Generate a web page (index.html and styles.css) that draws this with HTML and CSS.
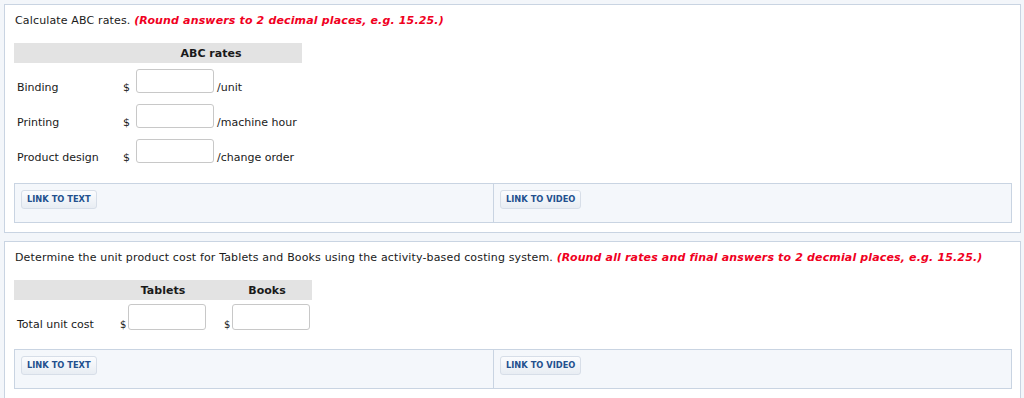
FILE: index.html
```html
<!DOCTYPE html>
<html>
<head>
<meta name="viewport" content="width=device-width, initial-scale=1">
<link rel="stylesheet" href="styles.css">
</head>
<body>

<div class="question">
  <p class="prompt">Calculate ABC rates. <span class="hint">(Round answers to 2 decimal places, e.g. 15.25.)</span></p>

  <table class="answers rates">
    <colgroup>
      <col class="c-label">
      <col class="c-cur">
      <col class="c-field">
      <col class="c-unit">
    </colgroup>
    <tr class="head">
      <th></th>
      <th colspan="3">ABC rates</th>
    </tr>
    <tr>
      <td class="label">Binding</td>
      <td class="cur">$</td>
      <td class="field"><input type="text"></td>
      <td class="unit">/unit</td>
    </tr>
    <tr>
      <td class="label">Printing</td>
      <td class="cur">$</td>
      <td class="field"><input type="text"></td>
      <td class="unit">/machine hour</td>
    </tr>
    <tr>
      <td class="label">Product design</td>
      <td class="cur">$</td>
      <td class="field"><input type="text"></td>
      <td class="unit">/change order</td>
    </tr>
  </table>

  <table class="links">
    <tr>
      <td class="first"><a class="linkbtn" href="#">LINK TO TEXT</a></td>
      <td><a class="linkbtn" href="#">LINK TO VIDEO</a></td>
    </tr>
  </table>
</div>

<div class="question">
  <p class="prompt">Determine the unit product cost for Tablets and Books using the activity-based costing system. <span class="hint">(Round all rates and final answers to 2 decmial places, e.g. 15.25.)</span></p>

  <table class="answers costs">
    <colgroup>
      <col class="c-label">
      <col class="c-col">
      <col class="c-gap">
      <col class="c-col">
    </colgroup>
    <tr class="head">
      <th></th>
      <th>Tablets</th>
      <th></th>
      <th>Books</th>
    </tr>
    <tr>
      <td class="label">Total unit cost</td>
      <td class="money"><span class="sign">$</span><input type="text"></td>
      <td></td>
      <td class="money"><span class="sign">$</span><input type="text"></td>
    </tr>
  </table>

  <table class="links">
    <tr>
      <td class="first"><a class="linkbtn" href="#">LINK TO TEXT</a></td>
      <td><a class="linkbtn" href="#">LINK TO VIDEO</a></td>
    </tr>
  </table>
</div>

</body>
</html>
```

FILE: styles.css
```css
body {
  margin: 0;
  padding: 4px 3px 0 4px;
  background: #f3f6fa;
  font-family: "DejaVu Sans", Verdana, sans-serif;
  font-size: 11px;
  color: #1a1a1a;
}

* {
  box-sizing: border-box;
}

/* one question card */
.question {
  background: #fff;
  border: 1px solid #c9d4e2;
  padding: 9px 8px 9px 9px;
  margin-bottom: 8px;
}

.prompt {
  margin: 0 0 0 1px;
  line-height: 14px;
  letter-spacing: 0.15px;
}

.hint {
  color: #f0001e;
  font-weight: bold;
  font-style: italic;
}

/* answer tables */
.answers {
  border-collapse: collapse;
  table-layout: fixed;
  margin-top: 15px;
}

.answers .head th {
  background: #e3e3e3;
  height: 20px;
  padding: 0;
  font-weight: bold;
  text-align: center;
  vertical-align: middle;
}

.answers td {
  padding: 0;
  vertical-align: bottom;
  line-height: 14px;
  white-space: nowrap;
}

.answers td.label {
  padding: 0 0 3px 3px;
}

.answers td.cur {
  padding: 0 6px 3px 0;
  text-align: right;
}

.answers td.field {
  padding: 6px 0 5px 0;
}

.answers td.unit {
  padding: 0 0 3px 3px;
}

/* first question: rates table */
.rates { width: 288px; }
.rates .c-label { width: 106px; }
.rates .c-cur { width: 16px; }
.rates .c-field { width: 78px; }
.rates .c-unit { width: 88px; }

/* second question: unit cost table */
.costs { width: 298px; }
.costs .c-label { width: 104px; }
.costs .c-col { width: 90px; }
.costs .c-gap { width: 14px; }

.costs td.money {
  padding: 4px 0 5px 2px;
}

.money {
  display: flex;
  align-items: flex-end;
}

.sign {
  width: 8px;
  font-size: 10px;
  line-height: 11px;
}

input[type=text] {
  display: block;
  width: 78px;
  height: 24px;
  margin: 0;
  border: 1px solid #c8c8c8;
  border-radius: 3px;
  background: #fff;
  font: inherit;
}

.costs input[type=text] {
  height: 26px;
}

/* link bar under each question */
.links {
  width: 100%;
  border-collapse: collapse;
  margin-top: 15px;
  background: #f4f7fb;
  border: 1px solid #c9d4e2;
}

.costs + .links {
  margin-top: 14px;
}

.links td {
  height: 39px;
  padding: 6px 6px 0 6px;
  vertical-align: top;
}

.links td.first {
  width: 479px;
  border-right: 1px solid #c9d4e2;
}

.linkbtn {
  display: inline-block;
  height: 19px;
  line-height: 17px;
  padding: 0 5px;
  border: 1px solid #d7dee8;
  border-radius: 3px;
  background: linear-gradient(#fbfcfe, #e8edf3);
  color: #23508e;
  font-size: 8.3px;
  font-weight: bold;
  text-decoration: none;
}
```
